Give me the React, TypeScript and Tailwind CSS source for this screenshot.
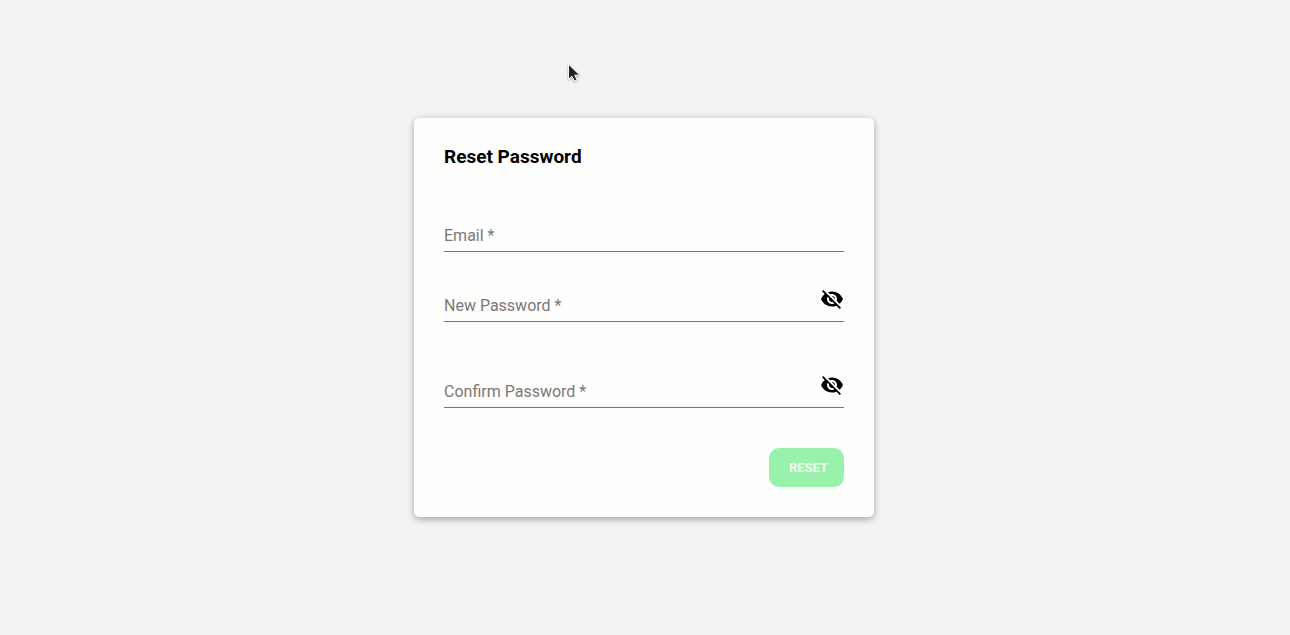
import { useState } from "react";
import { MdVisibility, MdVisibilityOff } from "react-icons/md";

type FieldProps = {
  id: string;
  label: string;
  type: "email" | "password";
};

function Field({ id, label, type }: FieldProps) {
  const [value, setValue] = useState("");
  const [visible, setVisible] = useState(false);
  const isPassword = type === "password";

  return (
    <div className="flex h-[35px] items-start border-b border-[#757575]">
      <div className="grid min-w-0 flex-1 self-end pb-[3px] text-base leading-6">
        <input
          id={id}
          type={isPassword && visible ? "text" : type}
          required
          value={value}
          onChange={(e) => setValue(e.target.value)}
          className="col-start-1 row-start-1 h-6 w-full bg-transparent text-black outline-none"
        />
        <label
          htmlFor={id}
          className={
            value
              ? "sr-only"
              : "pointer-events-none col-start-1 row-start-1 text-[#7b7777]"
          }
        >
          {label} *
        </label>
      </div>
      {isPassword && (
        <button
          type="button"
          aria-label={visible ? "Hide password" : "Show password"}
          onClick={() => setVisible(!visible)}
          className="size-6 text-black"
        >
          {visible ? (
            <MdVisibility className="size-6" />
          ) : (
            <MdVisibilityOff className="size-6" />
          )}
        </button>
      )}
    </div>
  );
}

function Pointer() {
  return (
    <svg
      className="pointer-events-none absolute top-[62px] left-[566px] h-5 w-4 drop-shadow-[0_1px_1px_rgba(0,0,0,0.3)]"
      viewBox="0 0 16 20"
      aria-hidden="true"
    >
      <path
        d="M2.5 2.2V17.4L6 14.2L8.4 19L11 17.9L8.8 13.2H13.8Z"
        fill="#262223"
        stroke="#fff"
        strokeWidth="1"
      />
    </svg>
  );
}

export default function App() {
  return (
    <main className="relative flex min-h-screen items-center justify-center bg-[#f2f4f4] pr-0.5 font-[Roboto,sans-serif]">
      <form
        noValidate
        onSubmit={(e) => e.preventDefault()}
        className="flex w-full max-w-[460px] flex-col rounded-[5px] bg-[#fefefc] p-[30px] shadow-[0_3px_6px_rgba(0,0,0,0.24),0_0_8px_rgba(0,0,0,0.1)]"
      >
        <h1 className="text-[19px] leading-[18px] font-bold text-black">
          Reset Password
        </h1>
        <div className="mt-[51px] flex flex-col">
          <Field id="email" label="Email" type="email" />
          <div className="mt-[35px] flex flex-col gap-[51px]">
            <Field id="new-password" label="New Password" type="password" />
            <Field
              id="confirm-password"
              label="Confirm Password"
              type="password"
            />
          </div>
        </div>
        <button
          type="submit"
          className="mt-10 flex h-[39px] w-[75px] items-center justify-center self-end rounded-[10px] bg-[#98f2ac] pl-1 text-[13px] font-bold text-[#effcf2]"
        >
          RESET
        </button>
      </form>
      <Pointer />
    </main>
  );
}
